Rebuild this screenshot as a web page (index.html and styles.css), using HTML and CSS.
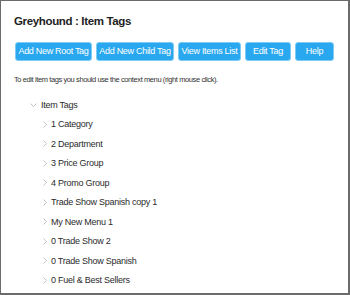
FILE: index.html
```html
<!DOCTYPE html>
<html>
<head>
<meta charset="utf-8">
<link rel="stylesheet" href="styles.css">
</head>
<body>
<div class="page">
  <h1 class="title">Greyhound : Item Tags</h1>
  <div class="toolbar">
    <button class="btn btn-root">Add New Root Tag</button>
    <button class="btn btn-child">Add New Child Tag</button>
    <button class="btn btn-list">View Items List</button>
    <button class="btn btn-edit">Edit Tag</button>
    <button class="btn btn-help">Help</button>
  </div>
  <p class="hint">To edit item tags you should use the context menu (right mouse click).</p>
  <ul class="tree">
    <li class="node root">
      <div class="row"><svg class="caret-down" width="7" height="4" viewBox="0 0 7 4"><polyline points="0.5,0.5 3.5,3.5 6.5,0.5" fill="none" stroke="#c2c2c2" stroke-width="1"/></svg><span>Item Tags</span></div>
      <ul class="children">
        <li class="row"><svg class="caret" width="4" height="7" viewBox="0 0 4 7"><polyline points="0.5,0.5 3.5,3.5 0.5,6.5" fill="none" stroke="#c2c2c2" stroke-width="1"/></svg><span>1 Category</span></li>
        <li class="row"><svg class="caret" width="4" height="7" viewBox="0 0 4 7"><polyline points="0.5,0.5 3.5,3.5 0.5,6.5" fill="none" stroke="#c2c2c2" stroke-width="1"/></svg><span>2 Department</span></li>
        <li class="row"><svg class="caret" width="4" height="7" viewBox="0 0 4 7"><polyline points="0.5,0.5 3.5,3.5 0.5,6.5" fill="none" stroke="#c2c2c2" stroke-width="1"/></svg><span>3 Price Group</span></li>
        <li class="row"><svg class="caret" width="4" height="7" viewBox="0 0 4 7"><polyline points="0.5,0.5 3.5,3.5 0.5,6.5" fill="none" stroke="#c2c2c2" stroke-width="1"/></svg><span>4 Promo Group</span></li>
        <li class="row"><svg class="caret" width="4" height="7" viewBox="0 0 4 7"><polyline points="0.5,0.5 3.5,3.5 0.5,6.5" fill="none" stroke="#c2c2c2" stroke-width="1"/></svg><span>Trade Show Spanish copy 1</span></li>
        <li class="row"><svg class="caret" width="4" height="7" viewBox="0 0 4 7"><polyline points="0.5,0.5 3.5,3.5 0.5,6.5" fill="none" stroke="#c2c2c2" stroke-width="1"/></svg><span>My New Menu 1</span></li>
        <li class="row"><svg class="caret" width="4" height="7" viewBox="0 0 4 7"><polyline points="0.5,0.5 3.5,3.5 0.5,6.5" fill="none" stroke="#c2c2c2" stroke-width="1"/></svg><span>0 Trade Show 2</span></li>
        <li class="row"><svg class="caret" width="4" height="7" viewBox="0 0 4 7"><polyline points="0.5,0.5 3.5,3.5 0.5,6.5" fill="none" stroke="#c2c2c2" stroke-width="1"/></svg><span>0 Trade Show Spanish</span></li>
        <li class="row"><svg class="caret" width="4" height="7" viewBox="0 0 4 7"><polyline points="0.5,0.5 3.5,3.5 0.5,6.5" fill="none" stroke="#c2c2c2" stroke-width="1"/></svg><span>0 Fuel &amp; Best Sellers</span></li>
      </ul>
    </li>
  </ul>
</div>
</body>
</html>
```

FILE: styles.css
```css
html, body {
  margin: 0;
  padding: 0;
  background: #ffffff;
}

body {
  font-family: "Liberation Sans", Arial, sans-serif;
  color: #333333;
}

.page {
  box-sizing: border-box;
  width: 350px;
  height: 295px;
  border-style: solid;
  border-color: #6b6b6b;
  border-width: 1px 2px 2px 1px;
  padding: 0 0 0 13px;
  overflow: hidden;
}

.title {
  margin: 13px 0 0 0;
  font-size: 11.5px;
  line-height: 15px;
  font-weight: bold;
  color: #222222;
  letter-spacing: -0.35px;
  white-space: nowrap;
}

.toolbar {
  display: flex;
  gap: 4px;
  margin-top: 13px;
  padding-left: 1px;
}

.btn {
  flex: none;
  box-sizing: border-box;
  height: 19px;
  padding: 0;
  border: 1px solid #7cccf6;
  border-radius: 3px;
  background: #29a8ef;
  color: #ffffff;
  font-family: inherit;
  font-size: 9px;
  letter-spacing: -0.3px;
  line-height: 17px;
  white-space: nowrap;
  text-align: center;
  cursor: pointer;
}

.btn-root { width: 77px; }
.btn-child { width: 78px; }
.btn-list { width: 63px; }
.btn-edit { width: 46px; }
.btn-help { width: 39px; }

.hint {
  margin: 14px 0 0 0;
  font-size: 7.5px;
  line-height: 10px;
  letter-spacing: -0.4px;
  color: #333333;
  white-space: nowrap;
}

.tree,
.children {
  list-style: none;
  margin: 0;
  padding: 0;
}

.tree {
  margin-top: 10px;
  padding-left: 16px;
}

.row {
  display: flex;
  align-items: center;
  height: 19.5px;
  font-size: 9px;
  letter-spacing: -0.25px;
  color: #2b2b2b;
  white-space: nowrap;
}

.caret-down {
  margin-right: 4px;
}

.children {
  padding-left: 13px;
}

.caret {
  margin-right: 4px;
}
```
